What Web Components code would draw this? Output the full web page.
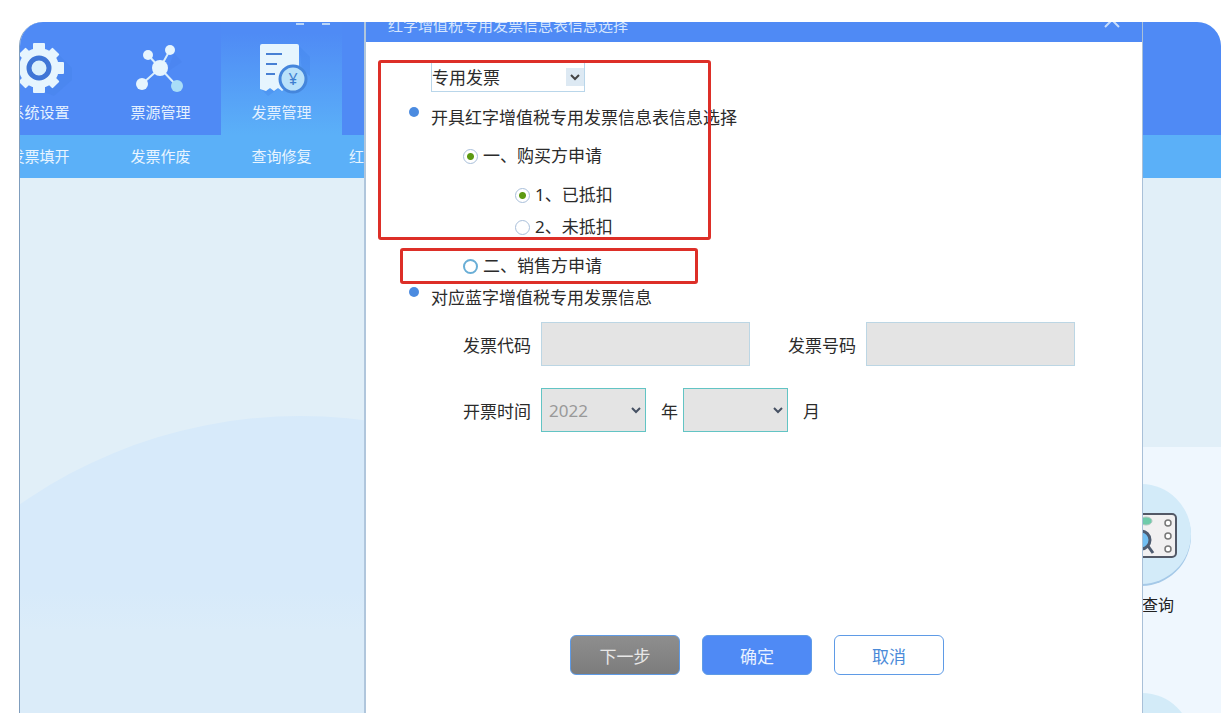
<!DOCTYPE html>
<html lang="zh-CN">
<head>
<meta charset="UTF-8">
<meta name="viewport" content="width=device-width, initial-scale=1.0">
<title>红字增值税专用发票信息表信息选择</title>
<style>
  body {
    margin: 0;
    background: #fff;
    color: #2b2b2b;
    font-family: "Noto Sans", "Noto Sans CJK SC", sans-serif;
    font-size: 17px;
  }
</style>
</head>
<body>
<tax-window>
  <main-nav slot="nav">
    <nav-item label="系统设置">
      <svg width="64" height="56" viewBox="0 0 64 56">
        <path d="M36 52L50 14L64 28V40L46 56Z" fill="#3f78e0" opacity=".18"/>
        <g fill="#e6f5fe">
          <circle cx="31" cy="28" r="20"/>
          <rect x="25" y="3" width="12" height="50" rx="1"/>
          <rect x="26" y="4" width="10" height="48" rx="1" transform="rotate(45 31 28)"/>
          <rect x="25" y="3" width="12" height="50" rx="1" transform="rotate(90 31 28)"/>
          <rect x="26" y="4" width="10" height="48" rx="1" transform="rotate(135 31 28)"/>
        </g>
        <circle cx="31" cy="28" r="10" fill="#d9f0fd" stroke="#3f76d6" stroke-width="5"/>
      </svg>
    </nav-item>
    <nav-item label="票源管理">
      <svg width="64" height="56" viewBox="0 0 64 56">
        <path d="M45 13L53 22L38 32Z" fill="#3f78e0" opacity=".2"/>
        <path d="M31 28L19 15M31 28L41 10M31 28L13 44M31 28L48 46" stroke="#d9eefc" stroke-width="2"/>
        <g fill="#e6f5fe">
          <circle cx="31" cy="28" r="8"/>
          <circle cx="19" cy="15" r="5"/>
          <circle cx="41" cy="10" r="5"/>
          <circle cx="13" cy="44" r="6"/>
        </g>
        <circle cx="48" cy="46" r="6" fill="#a9ddf8"/>
      </svg>
    </nav-item>
    <nav-item label="发票管理" active>
      <svg width="64" height="56" viewBox="0 0 64 56">
        <path d="M49 6L60 17V36L52 30ZM12 50L18 56L28 49Z" fill="#3f80e8" opacity=".3"/>
        <path d="M12 4H47Q49 4 49 6V50L45 48L41 51L36 48L32 51L28 48L24 51L20 48L16 51L10 49V6Q10 4 12 4Z" fill="#e6f5fe"/>
        <path d="M16 14H32M16 24H27M16 34H25" stroke="#4780d4" stroke-width="2"/>
        <circle cx="43" cy="39" r="13" fill="#b9e1fa" stroke="#4586dc" stroke-width="3"/>
        <text x="43" y="45" font-family="Noto Sans" font-size="16" text-anchor="middle" fill="#3f7fd0">¥</text>
      </svg>
    </nav-item>
  </main-nav>

  <sub-nav slot="nav">
    <a href="#fill">发票填开</a>
    <a href="#void">发票作废</a>
    <a href="#repair">查询修复</a>
    <a class="last" href="#red">红字</a>
  </sub-nav>

  <query-shortcut>查询</query-shortcut>

  <invoice-dialog slot="dialog" heading="红字增值税专用发票信息表信息选择"></invoice-dialog>
</tax-window>

<script>
class TaxWindow extends HTMLElement {
  connectedCallback() {
    this.attachShadow({ mode: 'open' });
    this.shadowRoot.innerHTML = `
      <style>
        :host {
          display: flex;
          flex-direction: column;
          position: relative;
          box-sizing: border-box;
          min-height: calc(100vh - 22px);
          margin: 22px 4px 0 19px;
          border-left: 1px solid #7f9dbd;
          border-radius: 24px 24px 0 0;
          overflow: hidden;
          background: #e1eff8;
        }
        .desktop {
          flex: 1;
          position: relative;
          display: flex;
          justify-content: flex-end;
          overflow: hidden;
        }
        .wave {
          position: absolute;
          left: -208px;
          top: 238px;
          width: 976px;
          height: 976px;
          border-radius: 50%;
          background: linear-gradient(#d7eafa 18%, #dbecf9 22%);
        }
        ::slotted(query-shortcut) {
          position: relative;
        }
      </style>
      <slot name="nav"></slot>
      <div class="desktop">
        <div class="wave"></div>
        <slot></slot>
      </div>
      <slot name="dialog"></slot>
    `;
  }
}
customElements.define('tax-window', TaxWindow);

class MainNav extends HTMLElement {
  connectedCallback() {
    this.attachShadow({ mode: 'open' });
    this.shadowRoot.innerHTML = `
      <style>
        :host {
          display: block;
          position: relative;
          background: #4f8af5;
        }
        nav {
          display: flex;
          margin-left: -41px;
        }
        .marks {
          position: absolute;
          left: 276px;
          top: 0;
        }
      </style>
      <nav><slot></slot></nav>
      <svg class="marks" width="36" height="3"><path d="M0 2H8M26 2H34" stroke="#b9d5f8" stroke-width="2"/></svg>
    `;
  }
}
customElements.define('main-nav', MainNav);

class NavItem extends HTMLElement {
  connectedCallback() {
    this.attachShadow({ mode: 'open' });
    this.shadowRoot.innerHTML = `
      <style>
        :host {
          display: block;
          width: 121px;
        }
        :host([active]) {
          background: linear-gradient(#4f8bf5 10%, #5bb0f8);
        }
        a {
          display: flex;
          flex-direction: column;
          align-items: center;
          padding: 18px 0 7px;
          color: #e4f1ff;
          font-size: 15px;
          line-height: 32px;
          text-decoration: none;
        }
      </style>
      <a href="#"><slot></slot><span>${this.getAttribute('label')}</span></a>
    `;
  }
}
customElements.define('nav-item', NavItem);

class SubNav extends HTMLElement {
  connectedCallback() {
    this.attachShadow({ mode: 'open' });
    this.shadowRoot.innerHTML = `
      <style>
        :host {
          display: block;
          background: #5bb0f8;
        }
        nav {
          display: flex;
          margin-left: -41px;
        }
        ::slotted(a) {
          box-sizing: border-box;
          width: 121px;
          color: #e9f5ff;
          font-size: 15px;
          line-height: 43px;
          text-align: center;
          text-decoration: none;
        }
        ::slotted(a.last) {
          padding-left: 7px;
          text-align: left;
        }
      </style>
      <nav><slot></slot></nav>
    `;
  }
}
customElements.define('sub-nav', SubNav);

class QueryShortcut extends HTMLElement {
  connectedCallback() {
    this.attachShadow({ mode: 'open' });
    this.shadowRoot.innerHTML = `
      <style>
        :host {
          display: flex;
          flex-direction: column;
          width: 79px;
          margin-top: 269px;
          background: #eff7fe;
          overflow: hidden;
        }
        a {
          display: block;
          padding-top: 36px;
          color: #222;
          font-size: 16px;
          line-height: 32px;
          text-decoration: none;
        }
        svg {
          display: block;
        }
        .next {
          width: 100px;
          height: 100px;
          margin: 72px 0 -80px -50px;
          border-radius: 50%;
          background: #d3ebf8;
        }
      </style>
      <a href="#query">
        <svg width="60" height="106" viewBox="0 0 60 106">
          <circle cx="-1" cy="53" r="50" fill="#a5c9e8"/>
          <circle cx="-1" cy="51" r="50" fill="#d3ebf9"/>
          <rect x="-20" y="31" width="54" height="43" rx="4" fill="#f1f0f1" stroke="#525866" stroke-width="2"/>
          <ellipse cx="4" cy="38" rx="6" ry="4" fill="#6fcbaa" stroke="#b0c7bf"/>
          <g fill="#fff" stroke="#777" stroke-width="1.5">
            <circle cx="26" cy="40" r="3"/>
            <circle cx="26" cy="53" r="3"/>
            <circle cx="26" cy="66" r="3"/>
          </g>
          <circle cx="-1" cy="57" r="9" fill="#72bff2" stroke="#4e5b70" stroke-width="3"/>
          <path d="M6 63L11 70" stroke="#4e5b70" stroke-width="3"/>
        </svg>
        <slot></slot>
      </a>
      <div class="next"></div>
    `;
  }
}
customElements.define('query-shortcut', QueryShortcut);

class RadioOption extends HTMLElement {
  connectedCallback() {
    this.attachShadow({ mode: 'open' });
    this.shadowRoot.innerHTML = `
      <style>
        :host {
          display: flex;
          height: 32px;
          line-height: 32px;
        }
        label {
          display: flex;
          align-items: center;
          gap: 5px;
        }
        input {
          appearance: none;
          box-sizing: border-box;
          width: 15px;
          height: 15px;
          margin: 0;
          border: 1px solid #a9bfda;
          border-radius: 50%;
          background: #fff;
        }
        input:checked {
          background: radial-gradient(circle, #5d9a12 0 3px, #fff 4px);
        }
        :host([focused]) input {
          border: 2px solid #69aed6;
        }
      </style>
      <label>
        <input type="radio" name="${this.getAttribute('group')}" ${this.hasAttribute('checked') ? 'checked' : ''}>
        <slot></slot>
      </label>
    `;
  }
}
customElements.define('radio-option', RadioOption);

class SectionTitle extends HTMLElement {
  connectedCallback() {
    this.attachShadow({ mode: 'open' });
    this.shadowRoot.innerHTML = `
      <style>
        :host {
          display: flex;
          gap: 12px;
          height: 32px;
          line-height: 32px;
        }
        i {
          width: 10px;
          height: 10px;
          margin-top: 5px;
          border-radius: 50%;
          background: #4b8be0;
        }
      </style>
      <i></i><slot></slot>
    `;
  }
}
customElements.define('section-title', SectionTitle);

class InvoiceDialog extends HTMLElement {
  connectedCallback() {
    this.attachShadow({ mode: 'open' });
    this.shadowRoot.innerHTML = `
      <style>
        :host {
          display: flex;
          flex-direction: column;
          position: absolute;
          left: 344px;
          right: 78px;
          top: -16px;
          bottom: 0;
          border-left: 2px solid #b0c6dc;
          border-right: 1px solid #a9c0d8;
          background: #fff;
        }
        header {
          display: flex;
          align-items: center;
          justify-content: space-between;
          height: 36px;
          padding: 0 22px;
          background: #4f8af5;
          color: #d6e6fd;
        }
        h1 {
          margin: 0;
          font-size: 15px;
          font-weight: normal;
        }
        header button {
          display: flex;
          padding: 0;
          border: 0;
          background: none;
        }
        form {
          flex: 1;
          display: flex;
          flex-direction: column;
          position: relative;
          padding: 20px 67px 38px 43px;
        }
        select, input {
          box-sizing: border-box;
          margin: 0;
          border-radius: 0;
          font: inherit;
        }
        select {
          appearance: none;
          width: 105px;
          height: 44px;
          padding: 0 7px;
          border: 1px solid #62c4c4;
          background: #e4e4e4 url("data:image/svg+xml,%3Csvg xmlns='http://www.w3.org/2000/svg' width='10' height='8'%3E%3Cpath d='M1 2l4 4 4-4' fill='none' stroke='%23465163' stroke-width='2'/%3E%3C/svg%3E") no-repeat right 4px center;
          color: #999;
        }
        select:disabled {
          border-color: #62c4c4;
          opacity: 1;
        }
        .kind {
          width: 154px;
          height: 30px;
          margin: 0 0 10px 22px;
          padding: 0;
          border-color: #b9d6ea;
          background-color: #fff;
          background-image: url("data:image/svg+xml,%3Csvg xmlns='http://www.w3.org/2000/svg' width='18' height='18'%3E%3Crect width='18' height='18' fill='%23dde9f3'/%3E%3Cpath d='M5 7l4 4 4-4' fill='none' stroke='%23444' stroke-width='2'/%3E%3C/svg%3E");
          background-position: right 0 center;
          color: #2b2b2b;
        }
        .options {
          margin: 6px 0 0 54px;
        }
        .nested {
          margin: 7px 0 7px 52px;
        }
        .fields {
          display: flex;
          gap: 38px;
          margin: 8px 0 22px 54px;
        }
        .field {
          flex: 1;
          display: flex;
          align-items: center;
          gap: 10px;
        }
        .field input {
          flex: 1;
          min-width: 0;
          height: 44px;
          border: 1px solid #bcd6e4;
          background: #e4e4e4;
        }
        .date {
          display: flex;
          align-items: center;
          margin-left: 54px;
        }
        .date label {
          margin-right: 10px;
        }
        .date span {
          margin: 0 5px 0 15px;
        }
        footer {
          display: flex;
          justify-content: center;
          gap: 22px;
          margin-top: auto;
          padding-left: 30px;
        }
        footer button {
          width: 110px;
          height: 40px;
          padding: 0;
          border: 1px solid #5f9be6;
          border-radius: 6px;
          background: #fff;
          color: #4a8ad8;
          font: inherit;
        }
        footer .next {
          background: linear-gradient(#8e8e8e, #7c7c7c);
          color: #e8e8e8;
        }
        footer .ok {
          background: #4f8af5;
          color: #e8f1ff;
        }
        .mark {
          position: absolute;
          box-sizing: border-box;
          border: 3px solid #dd2f28;
          border-radius: 3px;
          pointer-events: none;
        }
        .mark.buyer {
          left: 12px;
          top: 18px;
          width: 333px;
          height: 180px;
        }
        .mark.seller {
          left: 34px;
          top: 206px;
          width: 298px;
          height: 36px;
        }
      </style>
      <header>
        <h1>${this.getAttribute('heading')}</h1>
        <button type="button" aria-label="关闭">
          <svg width="16" height="16" viewBox="0 0 16 16"><path d="M1 -3L15 11M15 -3L1 11" stroke="#c9defb" stroke-width="2"/></svg>
        </button>
      </header>
      <form>
        <select class="kind" aria-label="发票种类"><option>专用发票</option></select>

        <section-title>开具红字增值税专用发票信息表信息选择</section-title>
        <div class="options">
          <radio-option group="applicant" checked>一、购买方申请</radio-option>
          <div class="nested">
            <radio-option group="deducted" checked>1、已抵扣</radio-option>
            <radio-option group="deducted">2、未抵扣</radio-option>
          </div>
          <radio-option group="applicant" focused>二、销售方申请</radio-option>
        </div>

        <section-title>对应蓝字增值税专用发票信息</section-title>
        <div class="fields">
          <div class="field"><label for="code">发票代码</label><input id="code" type="text" disabled></div>
          <div class="field"><label for="number">发票号码</label><input id="number" type="text" disabled></div>
        </div>
        <div class="date">
          <label for="year">开票时间</label>
          <select id="year" disabled><option>2022</option></select>
          <span>年</span>
          <select id="month" aria-label="月" disabled><option></option></select>
          <span>月</span>
        </div>

        <footer>
          <button type="button" class="next">下一步</button>
          <button type="button" class="ok">确定</button>
          <button type="button">取消</button>
        </footer>

        <div class="mark buyer"></div>
        <div class="mark seller"></div>
      </form>
    `;
  }
}
customElements.define('invoice-dialog', InvoiceDialog);
</script>
</body>
</html>
